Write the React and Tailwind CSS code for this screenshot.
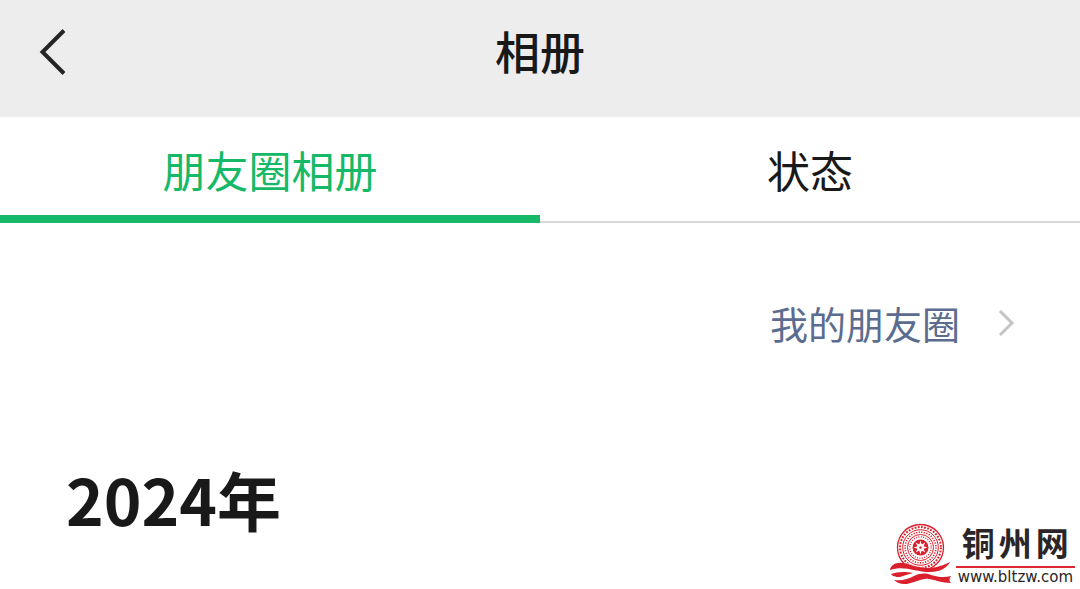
import React from "react";

function Watermark() {
  return (
    <a
      href="#site"
      aria-label="铜州网 www.bltzw.com"
      className="absolute right-[5px] bottom-[3px] flex items-end text-[#2b2527]"
    >
      <svg className="h-16 w-16" viewBox="888 522 64 64" fill="none" aria-hidden="true">
        <g stroke="#d9202c">
          <circle cx="919.5" cy="547.5" r="23" strokeWidth="1.3" />
          <circle cx="919.5" cy="547.5" r="20.4" strokeWidth="2" strokeDasharray="1.8 1.4" />
          <circle cx="919.5" cy="547.5" r="17.8" strokeWidth="1" />
          <circle cx="919.5" cy="547.5" r="15.4" strokeWidth="1.6" strokeDasharray="1.2 1.4" />
          <circle cx="919.5" cy="547.5" r="13" strokeWidth="1" />
          <circle cx="919.5" cy="547.5" r="10.7" strokeWidth="1.3" strokeDasharray="1 1.4" />
        </g>
        <circle cx="919.5" cy="547.5" r="8" fill="#d9202c" />
        <path
          fill="#fff"
          d="M919.500 540.500l1.200 4.100 3.700-2-2 3.700 4.100 1.200-4.100 1.200 2 3.700-3.700-2-1.200 4.100-1.200-4.100-3.700 2 2-3.700-4.100-1.200 4.100-1.200-2-3.700 3.700 2z"
        />
        <circle cx="919.5" cy="547.5" r="3" fill="#fff" />
        <circle cx="919.5" cy="547.5" r="1.2" fill="#d9202c" />
        <path fill="#fff" d="M888 569c4-7 13-8 24-4 12 4 23 5 35-3v24h-57z" />
        <path
          fill="#d9202c"
          d="M889 570c1-6 8-9 18-6 12 4 25 7 42-2-3 6-10 10-20 10-15 0-26-7-40-2z"
        />
        <path
          fill="#d9202c"
          d="M893 580c9 1 14-1 20-4 7-3 11-3 17-1 7 2 13 3 20 1-2 3-2 5 0 7-9 0-15-3-22-4-6-1-10 2-15 3-8 3-15 3-20-2z"
        />
        <path fill="#d9202c" d="M890 574c6-2 13-3 22-1-5 1-9 3-13 4-4 0-7 0-9-3z" />
      </svg>
      <span className="flex flex-col items-stretch pl-[3px]">
        <span className="flex justify-center gap-1 text-[33px] leading-9 font-bold">
          <span>铜</span>
          <span>州</span>
          <span>网</span>
        </span>
        <span className="mt-1.5 h-0.5 bg-[#dd2733]" />
        <span className="px-0.5 font-['DejaVu_Sans',sans-serif] text-[15px] leading-[18px]">
          www.bltzw.com
        </span>
      </span>
    </a>
  );
}

export default function App() {
  return (
    <div className="relative min-h-screen bg-white font-['Noto_Sans_CJK_SC',sans-serif] text-[#191919]">
      <header className="grid h-[117px] grid-cols-[1fr_auto_1fr] items-start bg-[#ededed] px-8 pt-5">
        <button type="button" aria-label="返回" className="flex h-16 w-12 items-center">
          <svg
            className="h-12 w-10"
            viewBox="0 0 40 48"
            fill="none"
            stroke="#252525"
            strokeWidth="4"
            aria-hidden="true"
          >
            <path d="M32 2.500L10.500 24L32 45.500" />
          </svg>
        </button>
        <h1 className="text-[45px] leading-[62px] font-medium">相册</h1>
      </header>

      <nav className="grid grid-cols-2" role="tablist" aria-label="相册分类">
        <button
          type="button"
          role="tab"
          aria-selected="true"
          className="h-[106px] border-b-8 border-[#15b967] pt-1.5 text-[43px] leading-[92px] text-[#15b967]"
        >
          朋友圈相册
        </button>
        <button
          type="button"
          role="tab"
          aria-selected="false"
          className="h-[106px] border-b-2 border-[#d9d9d9] pt-1.5 pb-1.5 text-[43px] leading-[92px]"
        >
          状态
        </button>
      </nav>

      <main className="pr-16 pl-[66px]">
        <div className="flex justify-end pt-[68px]">
          <a href="#moments" className="flex items-center gap-9 text-[38px] leading-16 text-[#5b6c8f]">
            我的朋友圈
            <svg
              className="h-8 w-5"
              viewBox="0 0 20 32"
              fill="none"
              stroke="#c4c4c4"
              strokeWidth="3"
              aria-hidden="true"
            >
              <path d="M4 4L16 16L4 28" />
            </svg>
          </a>
        </div>
        <h2 className="pt-[95px] text-[64px] leading-24 font-bold">2024年</h2>
      </main>

      <Watermark />
    </div>
  );
}
